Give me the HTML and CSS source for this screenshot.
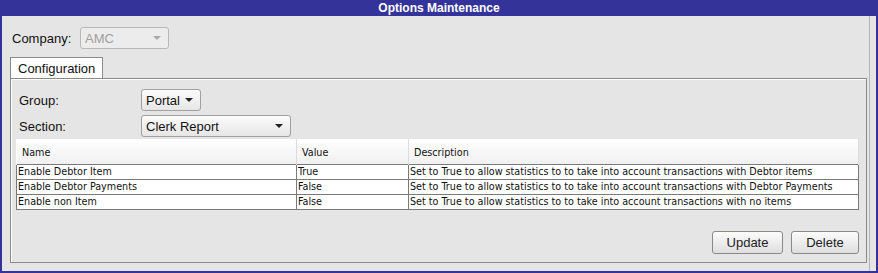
FILE: index.html
```html
<!DOCTYPE html>
<html lang="en">
<head>
  <meta charset="UTF-8" />
  <title>Options Maintenance</title>
  <link rel="stylesheet" href="styles.css">
</head>
<body>
  <div class="window">
    <div class="title-bar">Options Maintenance</div>

    <div class="content">
      <div class="company-row">
        <label>Company:</label>
        <div class="select disabled company-select">
          <span>AMC</span>
          <span class="arrow"></span>
        </div>
      </div>

      <div class="tabs">
        <div class="tab active">Configuration</div>
      </div>

      <div class="panel">
        <div class="field-row">
          <label>Group:</label>
          <div class="select group-select">
            <span>Portal</span>
            <span class="arrow"></span>
          </div>
        </div>
        <div class="field-row">
          <label>Section:</label>
          <div class="select section-select">
            <span>Clerk Report</span>
            <span class="arrow"></span>
          </div>
        </div>

        <table class="options-table">
          <colgroup>
            <col class="col-name">
            <col class="col-value">
            <col class="col-desc">
          </colgroup>
          <thead>
            <tr>
              <th>Name</th>
              <th>Value</th>
              <th>Description</th>
            </tr>
          </thead>
          <tbody>
            <tr>
              <td>Enable Debtor Item</td>
              <td>True</td>
              <td>Set to True to allow statistics to to take into account transactions with Debtor items</td>
            </tr>
            <tr>
              <td>Enable Debtor Payments</td>
              <td>False</td>
              <td>Set to True to allow statistics to to take into account transactions with Debtor Payments</td>
            </tr>
            <tr>
              <td>Enable non Item</td>
              <td>False</td>
              <td>Set to True to allow statistics to to take into account transactions with no items</td>
            </tr>
          </tbody>
        </table>

        <div class="actions">
          <button>Update</button>
          <button>Delete</button>
        </div>
      </div>
    </div>
  </div>
</body>
</html>
```

FILE: styles.css
```css
html, body {
  margin: 0;
  padding: 0;
  background: #e5e5e5;
  font-family: "Liberation Sans", Arial, sans-serif;
}

.window {
  width: 878px;
  height: 273px;
  box-sizing: border-box;
  border: 2px solid #333399;
  border-top: none;
  background: #e5e5e5;
  display: flex;
  flex-direction: column;
}

.title-bar {
  height: 16px;
  line-height: 16px;
  margin: 0 -2px;
  background: #333399;
  color: #fff;
  font-weight: bold;
  font-size: 12px;
  text-align: center;
}

.content {
  flex: 1;
  padding: 11px 8px 8px 8px;
  display: flex;
  flex-direction: column;
  box-shadow: inset -6px 0 0 #e5e5e5, inset -7px 0 0 #b4b4b4;
}

.company-row {
  display: flex;
  align-items: center;
  height: 22px;
  padding-left: 2px;
}

.company-row label {
  font-size: 13px;
  color: #111;
  width: 68px;
}

.select {
  box-sizing: border-box;
  height: 22px;
  border: 1px solid #a0a0a0;
  border-radius: 3px;
  background: linear-gradient(#fbfbfb, #e6e6e6);
  display: flex;
  align-items: center;
  justify-content: space-between;
  padding: 0 7px 0 4px;
  font-size: 13px;
  color: #111;
}

.select .arrow {
  width: 0;
  height: 0;
  border-left: 4px solid transparent;
  border-right: 4px solid transparent;
  border-top: 4px solid #222;
}

.select.disabled {
  background: #ececec;
  border-color: #b8b8b8;
  color: #a0a0a0;
}

.select.disabled .arrow {
  border-top-color: #a8a8a8;
}

.company-select {
  width: 89px;
}

.tabs {
  display: flex;
  margin-top: 8px;
  height: 22px;
}

.tab {
  box-sizing: border-box;
  height: 22px;
  padding: 3px 7px 0 7px;
  font-size: 13px;
  color: #111;
  background: #fff;
  border: 1px solid #8a8a8a;
  border-bottom: none;
}

.panel {
  flex: 1;
  box-sizing: border-box;
  width: 857px;
  margin-top: -1px;
  border: 1px solid #8a8a8a;
  box-shadow: inset 1px 1px 0 #fff;
  padding: 10px 7px 8px 5px;
  display: flex;
  flex-direction: column;
}

.field-row {
  display: flex;
  align-items: center;
  height: 22px;
  margin-bottom: 4px;
  padding-left: 3px;
}

.field-row label {
  width: 122px;
  font-size: 13px;
  color: #111;
}

.group-select {
  width: 60px;
}

.section-select {
  width: 150px;
}

.options-table {
  width: 842px;
  border-collapse: collapse;
  table-layout: fixed;
  font-family: "DejaVu Sans Condensed", "DejaVu Sans", Verdana, sans-serif;
  font-stretch: condensed;
  font-size: 10.7px;
  color: #111;
  margin-top: -2px;
}

.col-name { width: 280px; }
.col-value { width: 112px; }
.col-desc { width: 450px; }

.options-table th {
  height: 24px;
  text-align: left;
  font-weight: normal;
  padding: 1px 0 0 5px;
  background: linear-gradient(#ffffff, #f0f0f0);
  border-left: 1px solid #fff;
  border-right: 1px solid #dcdcdc;
}

.options-table td {
  height: 14px;
  line-height: 14px;
  padding: 0 0 0 1px;
  background: #fff;
  border: 1px solid #7a7a7a;
  white-space: nowrap;
  overflow: hidden;
}

.actions {
  margin-top: auto;
  display: flex;
  justify-content: flex-end;
  gap: 8px;
}

.actions button {
  box-sizing: border-box;
  height: 23px;
  padding: 0 12px;
  font-family: "Liberation Sans", Arial, sans-serif;
  font-size: 13px;
  color: #222;
  border: 1px solid #8a8a8a;
  border-radius: 3px;
  background: linear-gradient(#fcfcfc, #dedede);
}

.actions button:first-child {
  width: 71px;
}

.actions button:last-child {
  width: 68px;
}
```
